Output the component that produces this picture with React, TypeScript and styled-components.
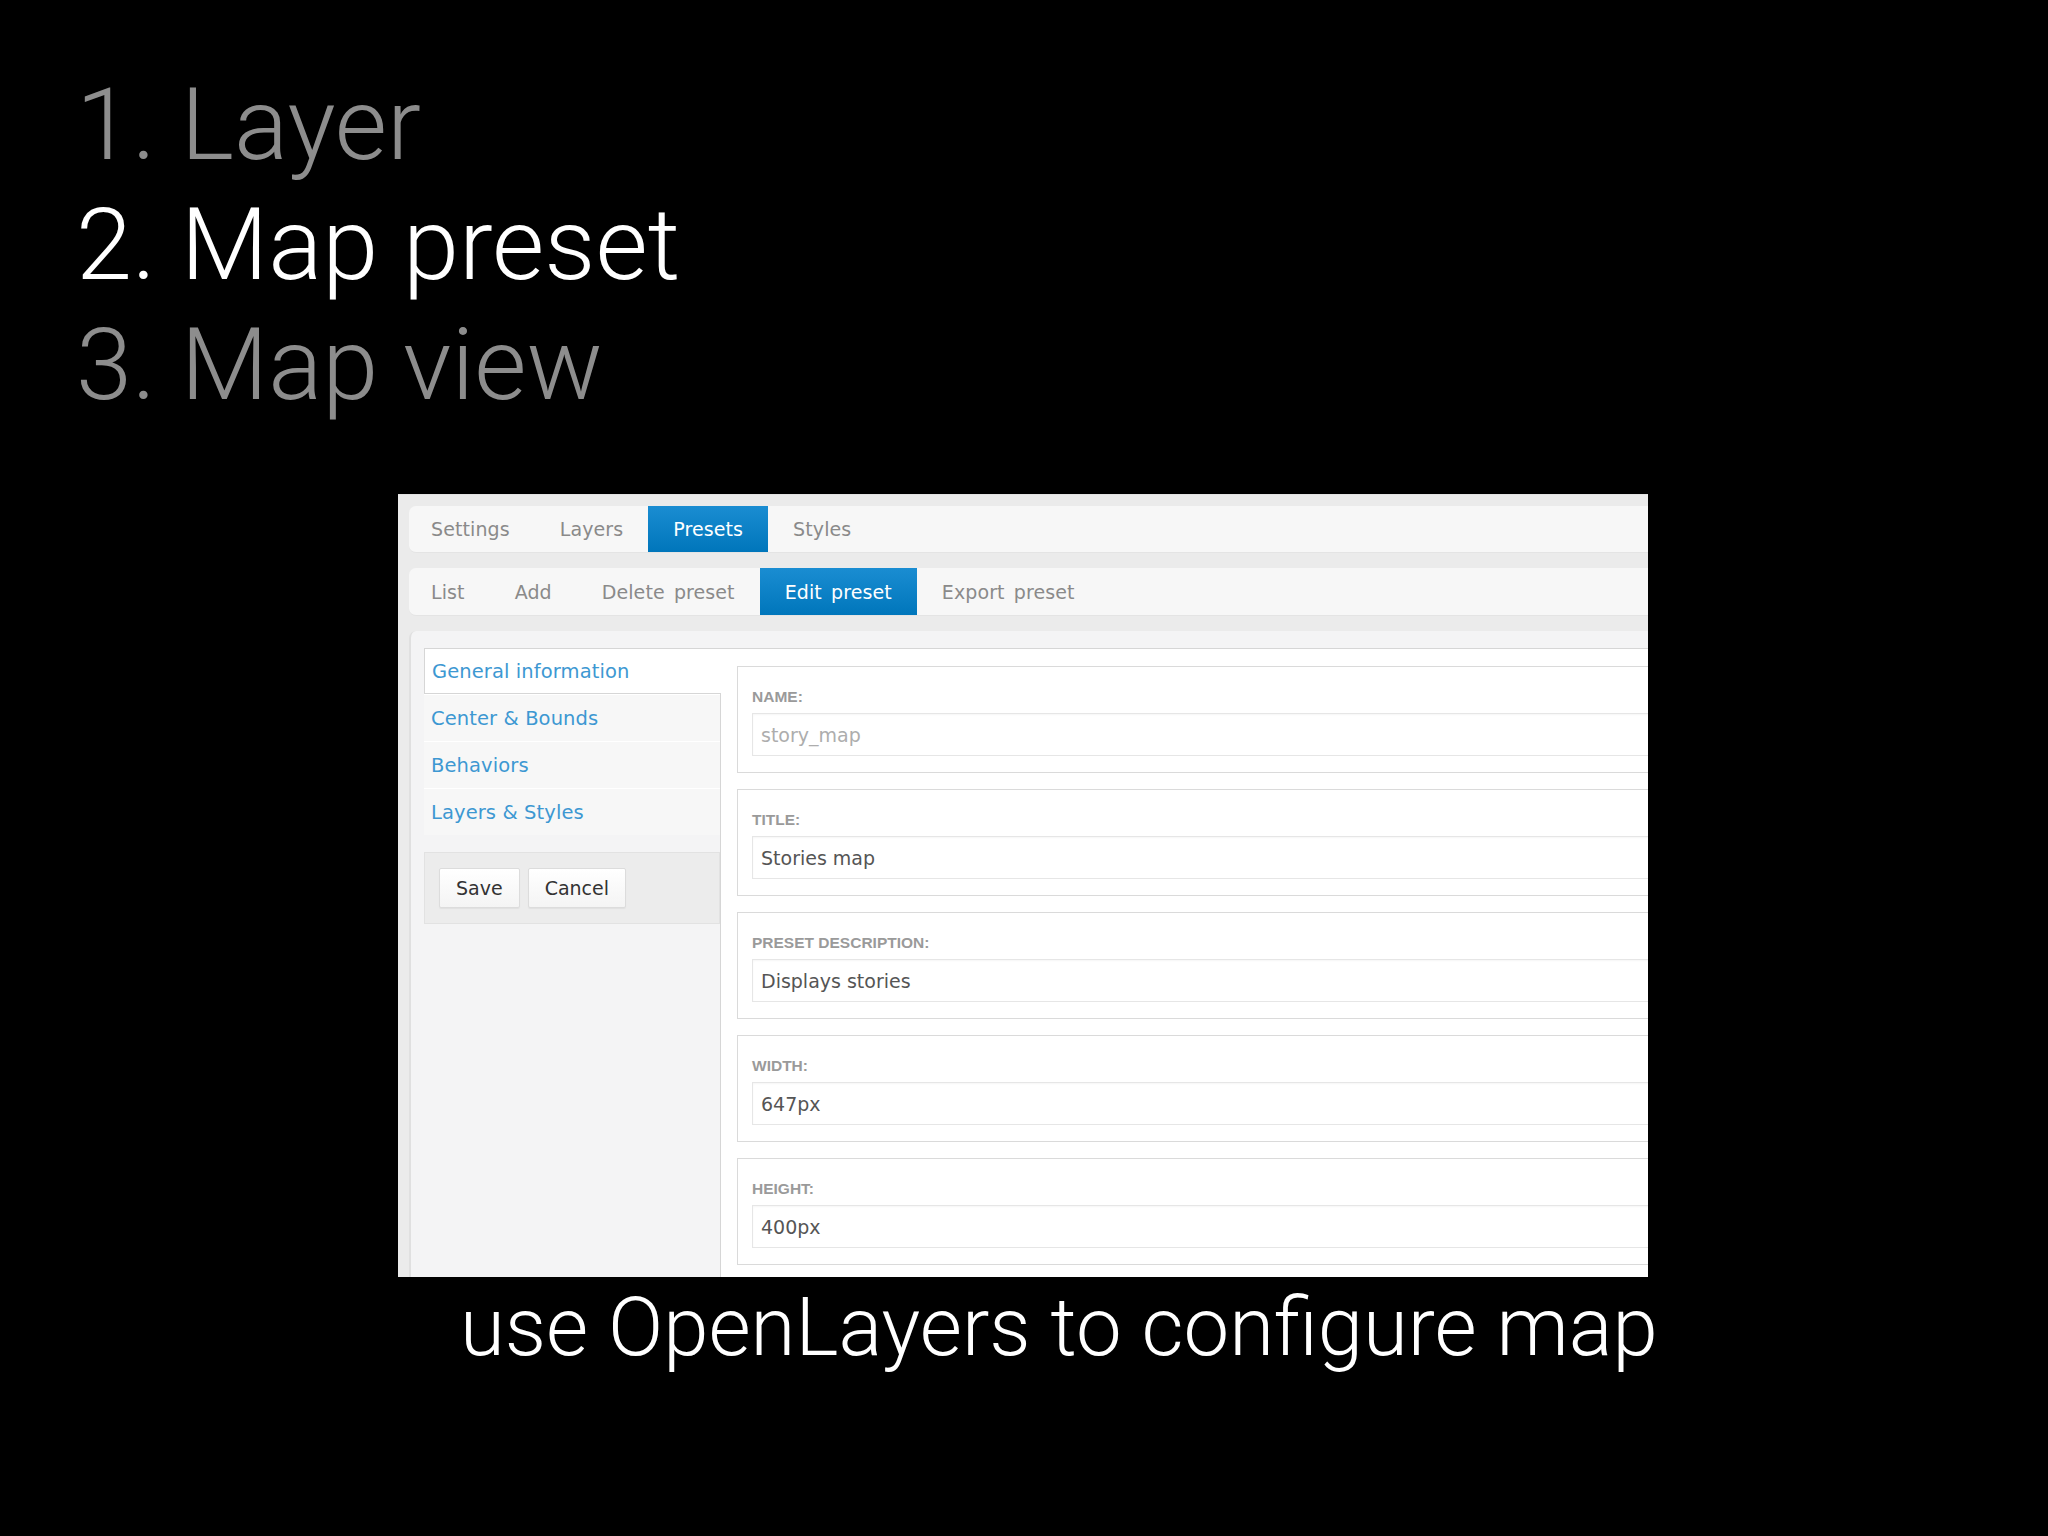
import React from "react";
import styled, { createGlobalStyle } from "styled-components";

const Global = createGlobalStyle`
  html, body { margin: 0; padding: 0; background: #000; }
  * { box-sizing: border-box; }
`;

const Slide = styled.div`
  width: 2048px;
  height: 1536px;
  background: #000;
  overflow: hidden;
  display: flex;
  flex-direction: column;
`;

const Steps = styled.ol`
  list-style: none;
  margin: 0;
  padding: 65px 0 0 76px;
  font-family: Roboto, "Liberation Sans", sans-serif;
  font-weight: 300;
  font-size: 101px;
  line-height: 120px;
`;

const Step = styled.li<{ $current?: boolean }>`
  color: ${(p) => (p.$current ? "#ffffff" : "#8d8d8d")};
  white-space: nowrap;
`;

const Shot = styled.div`
  margin: 69px 0 0 398px;
  width: 1250px;
  height: 783px;
  background: #ebebeb;
  border-top: 1px solid #e2e2e2;
  overflow: hidden;
  padding: 11px 0 0 11px;
  display: flex;
  flex-direction: column;
  font-family: "DejaVu Sans", Verdana, sans-serif;
`;

const Inner = styled.div`
  width: 1300px;
  display: flex;
  flex-direction: column;
  gap: 15px;
`;

const TabBar = styled.div<{ $h: number }>`
  display: flex;
  height: ${(p) => p.$h}px;
  background: #f7f7f7;
  border-radius: 7px 0 0 7px;
  border-bottom: 1px solid #e4e4e4;
  overflow: hidden;
`;

const Tab = styled.div<{ $active?: boolean }>`
  display: flex;
  align-items: center;
  padding: 0 25px;
  font-size: 19px;
  letter-spacing: 0.1px;
  word-spacing: 3px;
  color: ${(p) => (p.$active ? "#ffffff" : "#8a8a8a")};
  background: ${(p) =>
    p.$active ? "linear-gradient(#1a8dd2, #0076bb)" : "transparent"};
  &:first-child {
    padding-left: 22px;
  }
`;

const Content = styled.div`
  background: #f4f4f5;
  border-radius: 7px 0 0 0;
  border-left: 2px solid #e0e0e0;
  padding: 17px 0 0 13px;
  display: grid;
  grid-template-columns: 296px 1fr;
  height: 700px;
`;

const SideCol = styled.div`
  display: flex;
  flex-direction: column;
`;

const VTab = styled.div<{ $active?: boolean }>`
  height: ${(p) => (p.$active ? 46 : 47)}px;
  display: flex;
  align-items: center;
  padding-left: 7px;
  font-size: 19.5px;
  letter-spacing: 0.1px;
  color: #3d98d2;
  background: ${(p) => (p.$active ? "#ffffff" : "#f7f7f7")};
  border: ${(p) => (p.$active ? "1px solid #d6d6d6" : "none")};
  border-right: none;
  border-top: ${(p) => (p.$active ? "1px solid #d6d6d6" : "1px solid #ffffff")};
  margin-right: ${(p) => (p.$active ? "-1px" : "0")};
  position: relative;
  z-index: ${(p) => (p.$active ? 1 : 0)};
`;

const ActionBox = styled.div`
  margin-top: 17px;
  height: 72px;
  background: #ececec;
  border: 1px solid #e2e2e2;
  display: flex;
  align-items: center;
  gap: 8px;
  padding-left: 14px;
`;

const Button = styled.button`
  height: 40px;
  padding: 0 16px;
  font-family: "DejaVu Sans", Verdana, sans-serif;
  font-size: 19px;
  color: #333;
  background: linear-gradient(#ffffff, #f4f4f4);
  border: 1px solid #dcdcdc;
  border-radius: 2px;
  box-shadow: 0 1px 1px rgba(0, 0, 0, 0.05);
`;

const Main = styled.div`
  background: #ffffff;
  border-top: 1px solid #d6d6d6;
  border-left: 1px solid #d6d6d6;
  padding: 17px 0 0 16px;
  display: flex;
  flex-direction: column;
  gap: 16px;
`;

const Field = styled.div`
  height: 107px;
  border: 1px solid #dadada;
  border-right: none;
  background: #fff;
  padding: 21px 0 0 14px;
  display: flex;
  flex-direction: column;
`;

const Label = styled.div`
  font-family: "Liberation Sans", Arial, sans-serif;
  font-weight: 700;
  font-size: 15.5px;
  line-height: 18px;
  color: #9a9a9a;
  text-transform: uppercase;
  margin-bottom: 7px;
`;

const Input = styled.div<{ $disabled?: boolean }>`
  height: 43px;
  border: 1px solid #e6e6e6;
  border-right: none;
  box-shadow: inset 0 1px 2px rgba(0, 0, 0, 0.04);
  display: flex;
  align-items: center;
  padding-left: 8px;
  font-size: 19px;
  color: ${(p) => (p.$disabled ? "#adadad" : "#555555")};
`;

const Caption = styled.div`
  margin: 2px 0 0 460px;
  font-family: Roboto, "Liberation Sans", sans-serif;
  font-weight: 300;
  font-size: 81.5px;
  line-height: 96px;
  color: #ffffff;
  white-space: nowrap;
`;

const fields = [
  { label: "Name:", value: "story_map", disabled: true },
  { label: "Title:", value: "Stories map" },
  { label: "Preset description:", value: "Displays stories" },
  { label: "Width:", value: "647px" },
  { label: "Height:", value: "400px" },
];

export default function App() {
  return (
    <Slide>
      <Global />
      <Steps>
        <Step>1. Layer</Step>
        <Step $current>2. Map preset</Step>
        <Step>3. Map view</Step>
      </Steps>
      <Shot>
        <Inner>
          <TabBar $h={47}>
            <Tab>Settings</Tab>
            <Tab>Layers</Tab>
            <Tab $active>Presets</Tab>
            <Tab>Styles</Tab>
          </TabBar>
          <TabBar $h={48}>
            <Tab>List</Tab>
            <Tab>Add</Tab>
            <Tab>Delete preset</Tab>
            <Tab $active>Edit preset</Tab>
            <Tab>Export preset</Tab>
          </TabBar>
          <Content>
            <SideCol>
              <VTab $active>General information</VTab>
              <VTab>Center &amp; Bounds</VTab>
              <VTab>Behaviors</VTab>
              <VTab>Layers &amp; Styles</VTab>
              <ActionBox>
                <Button>Save</Button>
                <Button>Cancel</Button>
              </ActionBox>
            </SideCol>
            <Main>
              {fields.map((f) => (
                <Field key={f.label}>
                  <Label>{f.label}</Label>
                  <Input $disabled={f.disabled}>{f.value}</Input>
                </Field>
              ))}
            </Main>
          </Content>
        </Inner>
      </Shot>
      <Caption>use OpenLayers to configure map</Caption>
    </Slide>
  );
}
